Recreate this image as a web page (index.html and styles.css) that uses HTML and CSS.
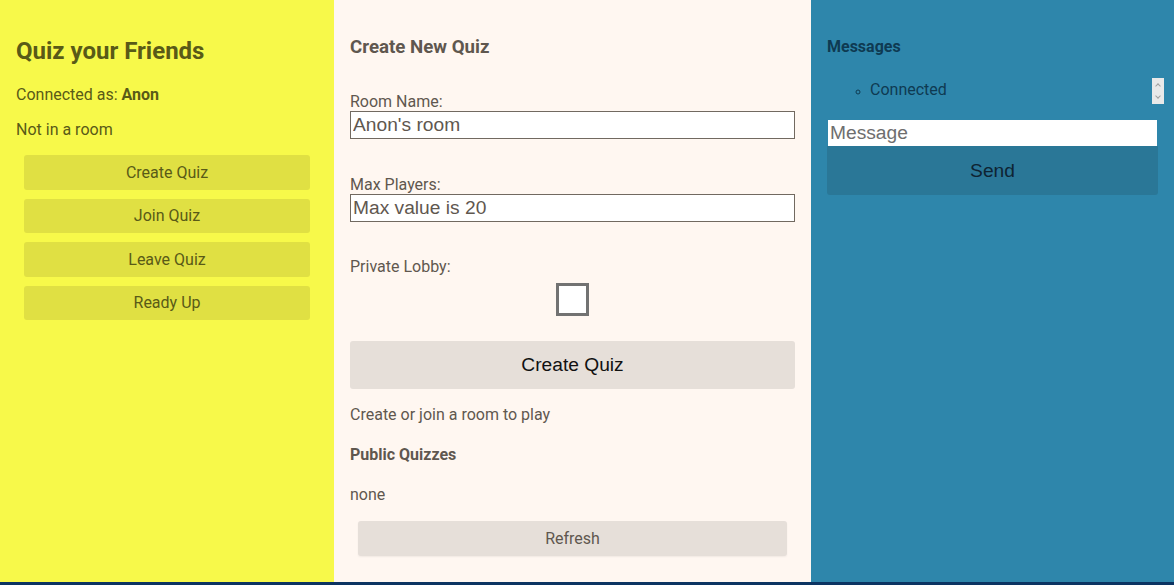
FILE: index.html
```html
<!DOCTYPE html>
<html>
<head>
<meta charset="utf-8">
<link rel="stylesheet" href="styles.css">
</head>
<body>
<div class="app">
  <aside class="side">
    <h1 class="title">Quiz your Friends</h1>
    <p class="info">Connected as: <b>Anon</b></p>
    <p class="info room">Not in a room</p>
    <div class="actions">
      <button class="side-btn">Create Quiz</button>
      <button class="side-btn">Join Quiz</button>
      <button class="side-btn">Leave Quiz</button>
      <button class="side-btn">Ready Up</button>
    </div>
  </aside>
  <main class="main">
    <h2 class="main-title">Create New Quiz</h2>
    <label class="field-label first">Room Name:</label>
    <input class="field" type="text" value="Anon's room">
    <label class="field-label second">Max Players:</label>
    <input class="field" type="text" placeholder="Max value is 20">
    <label class="field-label third">Private Lobby:</label>
    <div class="check-row"><span class="check"></span></div>
    <button class="big-btn">Create Quiz</button>
    <p class="status">Create or join a room to play</p>
    <h3 class="sub-title">Public Quizzes</h3>
    <p class="status none">none</p>
    <button class="refresh">Refresh</button>
  </main>
  <section class="chat">
    <h3 class="chat-title">Messages</h3>
    <div class="log">
      <ul class="log-list"><li>Connected</li></ul>
      <div class="scroll"><span class="arr up"></span><span class="arr down"></span></div>
    </div>
    <input class="msg" type="text" placeholder="Message">
    <button class="send">Send</button>
  </section>
</div>
</body>
</html>
```
FILE: styles.css
```css
* { box-sizing: border-box; }
html, body { margin: 0; padding: 0; }
body {
  background: #0c3462;
  font-family: Roboto, "Liberation Sans", sans-serif;
  height: 585px;
  overflow: hidden;
}
.app {
  display: flex;
  height: 582px;
}
.side {
  width: 334px;
  background: #f7f94a;
  color: #595a17;
  padding: 37px 16px 0;
}
.title {
  margin: 0;
  font-size: 24px;
  line-height: 28px;
  font-weight: 700;
}
.info {
  margin: 20px 0 0;
  font-size: 16px;
  line-height: 19px;
}
.info b { font-weight: 700; }
.room { margin-top: 16px; }
.actions {
  display: flex;
  flex-direction: column;
  gap: 9px;
  padding: 16px 8px 0;
}
.side-btn {
  height: 34.5px;
  border: none;
  border-radius: 3px;
  background: #e0e043;
  color: #595a17;
  font-family: Roboto, sans-serif;
  font-size: 16px;
  padding: 0;
}
.main {
  width: 477px;
  background: #fff7f1;
  color: #5f574f;
  padding: 36px 16px 0;
  display: flex;
  flex-direction: column;
}
.main-title {
  margin: 0;
  font-size: 18.7px;
  line-height: 22px;
  font-weight: 700;
}
.field-label {
  display: block;
  font-size: 16px;
  line-height: 19px;
  margin-bottom: 0.5px;
}
.field-label.first { margin-top: 33.5px; }
.field-label.second { margin-top: 35.5px; }
.field-label.third { margin-top: 34.5px; }
.field {
  display: block;
  width: 100%;
  height: 28px;
  border: 1px solid #716960;
  background: #fff;
  font-family: "Liberation Sans", Arial, sans-serif;
  font-size: 19.2px;
  color: #5f574f;
  padding: 0 2px;
  margin: 0;
}
.field::placeholder { color: #5f574f; opacity: 1; }
.check-row {
  display: flex;
  justify-content: center;
  margin-top: 6.5px;
}
.check {
  width: 33px;
  height: 33px;
  border: 3px solid #727272;
  background: #fff;
}
.big-btn {
  margin-top: 25px;
  height: 48px;
  border: none;
  border-radius: 3px;
  background: #e6dfd9;
  color: #111;
  font-family: "Liberation Sans", Arial, sans-serif;
  font-size: 19.2px;
}
.status {
  margin: 16.5px 0 0;
  font-size: 16px;
  line-height: 19px;
}
.sub-title {
  margin: 21px 0 0;
  font-size: 16px;
  line-height: 19px;
  font-weight: 700;
}
.status.none { margin-top: 21px; }
.refresh {
  margin: 16.5px 8px 0;
  height: 35px;
  border: none;
  border-radius: 3px;
  background: #e6dfd9;
  color: #5f574f;
  font-family: Roboto, sans-serif;
  font-size: 16px;
  box-shadow: 0 1px 2px rgba(0,0,0,0.06);
}
.chat {
  flex: 1;
  background: #2e86ab;
  color: #0e3a52;
  padding: 37px 16px 0;
  display: flex;
  flex-direction: column;
}
.chat-title {
  margin: 0;
  font-size: 16px;
  line-height: 19px;
  font-weight: 700;
}
.log {
  margin-top: 22px;
  height: 26px;
  display: flex;
  justify-content: space-between;
}
.log-list {
  margin: 0;
  padding-left: 43px;
  list-style: circle;
  font-size: 16px;
  line-height: 19px;
  padding-top: 2px;
}
.log-list li::marker { font-size: 12px; }
.scroll {
  width: 12px;
  height: 26px;
  margin-right: -6px;
  background: #e9e9e9;
  display: flex;
  flex-direction: column;
  justify-content: space-between;
  align-items: center;
  padding: 4px 0;
}
.arr {
  width: 4px;
  height: 4px;
  border-left: 1px solid #a0a0a0;
  border-top: 1px solid #a0a0a0;
}
.arr.up { transform: rotate(45deg); margin-top: 2px; }
.arr.down { transform: rotate(225deg); margin-bottom: 2px; }
.msg {
  margin: 16px 1px 0;
  height: 26px;
  border: none;
  background: #fff;
  font-family: "Liberation Sans", Arial, sans-serif;
  font-size: 19.2px;
  padding: 0 2px;
  color: #222;
}
.msg::placeholder { color: #6e6e6e; opacity: 1; }
.send {
  height: 49px;
  border: none;
  border-radius: 0 0 3px 3px;
  background: #2a7797;
  color: #0e2433;
  font-family: "Liberation Sans", Arial, sans-serif;
  font-size: 19.2px;
}
```
